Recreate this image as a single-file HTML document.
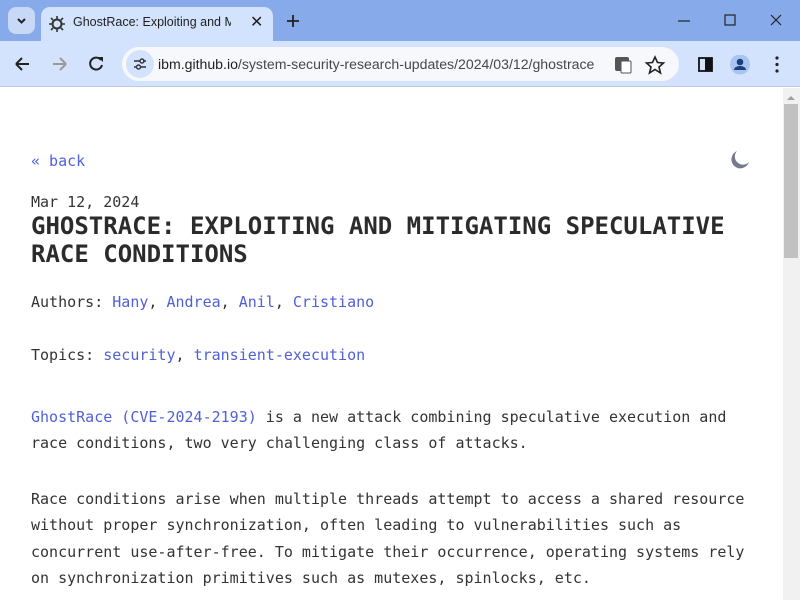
<!DOCTYPE html>
<html><head><meta charset="utf-8"><style>
*{margin:0;padding:0;box-sizing:border-box}
body{width:800px;height:600px;overflow:hidden;background:#fff;font-family:"Liberation Sans",sans-serif;position:relative}
.tabbar{position:absolute;left:0;top:0;width:800px;height:41px;background:#86aaea}
.tabdrop{position:absolute;left:8px;top:7px;width:27px;height:27px;border-radius:8px;background:#c7d9f7}
.tab{position:absolute;left:41px;top:7px;width:232px;height:34px;background:#d3e3fd;border-radius:9px 9px 0 0}
.tab .t{position:absolute;left:32px;top:8px;font-size:12.5px;color:#1f1f1f;white-space:nowrap;width:158px;overflow:hidden}
.tab .x{position:absolute;left:209px;top:5px;font-size:16px;color:#222}
.toolbar{position:absolute;left:0;top:41px;width:800px;height:46px;background:#d3e3fd;border-bottom:1px solid #c0c8d6}
.omni{position:absolute;left:122px;top:47px;width:557px;height:34px;border-radius:17px;background:#f6f8fc}
.omni .ic{position:absolute;left:4px;top:3px;width:28px;height:28px;border-radius:14px;background:#d3e3fd}
.url{position:absolute;left:158px;top:56px;font-size:14.1px;color:#1f1f1f;white-space:nowrap}
.url span{color:#474747}
.content{position:absolute;left:31px;top:89px;font-family:"DejaVu Sans Mono","Liberation Mono",monospace;font-size:15px;color:#333;line-height:26.3px;white-space:nowrap}
a{color:#5060d8;text-decoration:none}
.scroll{position:absolute;left:783px;top:88px;width:17px;height:512px;background:#f1f1f1}
.thumb{position:absolute;left:784px;top:104px;width:14px;height:154px;background:#c1c1c1}
</style></head><body>
<div class="tabbar"></div>
<div class="tabdrop"><svg width="27" height="27"><path d="M10 12l3.5 3.5L17 12" stroke="#222" stroke-width="2" fill="none"/></svg></div>
<div class="tab">
<svg style="position:absolute;left:8px;top:9px" width="16" height="16"><circle cx="8" cy="8" r="4.5" fill="none" stroke="#333" stroke-width="2"/><g stroke="#333" stroke-width="1.6"><path d="M8 0v3M8 13v3M0 8h3M13 8h3M2 2l2 2M12 12l2 2M2 14l2-2M12 4l2-2"/></g></svg>
<div class="t">GhostRace: Exploiting and Mitig</div><div class="x">✕</div></div>
<svg style="position:absolute;left:285px;top:13px" width="16" height="16"><path d="M8 2v12M2 8h12" stroke="#222" stroke-width="1.8"/></svg>
<svg style="position:absolute;left:675px;top:12px" width="120" height="18"><path d="M3 9h12" stroke="#222" stroke-width="1.2"/><rect x="50" y="3" width="10" height="10" fill="none" stroke="#222" stroke-width="1.2"/><path d="M96 3l10 10M106 3l-10 10" stroke="#222" stroke-width="1.2"/></svg>
<div class="toolbar"></div>
<svg style="position:absolute;left:12px;top:54px" width="95" height="20"><path d="M4 10h13M4 10l6-6M4 10l6 6" stroke="#222" stroke-width="2" fill="none"/><path d="M41 10h13M54 10l-6-6M54 10l-6 6" stroke="#999" stroke-width="2" fill="none"/><path d="M89 6a6 6 0 1 0 1 5" stroke="#222" stroke-width="2" fill="none"/><path d="M86 3h5v5z" fill="#222"/></svg>
<div class="omni"><div class="ic"><svg width="28" height="28"><path d="M8 11h6M8 17h3M17 11h3M14 17h6" stroke="#333" stroke-width="1.6"/><circle cx="16" cy="11" r="2" fill="none" stroke="#333" stroke-width="1.4"/><circle cx="12.5" cy="17" r="2" fill="none" stroke="#333" stroke-width="1.4"/></svg></div></div>
<div class="url">ibm.github.io<span>/system-security-research-updates/2024/03/12/ghostrace</span></div>
<svg style="position:absolute;left:613px;top:55px" width="175" height="20"><rect x="2" y="2" width="14" height="14" rx="2" fill="#555"/><rect x="8" y="6" width="10" height="12" rx="1" fill="#fff" stroke="#555"/><path d="M42 2l2.5 5.5 6 .5-4.5 4 1.5 6-5.5-3.5-5.5 3.5 1.5-6-4.5-4 6-.5z" fill="none" stroke="#222" stroke-width="1.6"/><rect x="86" y="3" width="13" height="13" fill="none" stroke="#111" stroke-width="1.8"/><rect x="92" y="3" width="7" height="13" fill="#111"/><circle cx="127" cy="9.5" r="10" fill="#a8c4f0"/><circle cx="127" cy="7" r="3.3" fill="#1b3f7a"/><path d="M121 15a6 4 0 0 1 12 0z" fill="#1b3f7a"/><g fill="#222"><circle cx="164" cy="3" r="1.6"/><circle cx="164" cy="9.5" r="1.6"/><circle cx="164" cy="16" r="1.6"/></g></svg>
<svg style="position:absolute;left:729px;top:149px" width="22" height="22"><path d="M8 2a9 9 0 1 0 12 11A7.5 7.5 0 0 1 8 2z" fill="#737b8c"/></svg>
<div class="scroll"></div><div class="thumb"></div>
<svg style="position:absolute;left:786px;top:94px" width="10" height="8"><path d="M1 6l4-4 4 4z" fill="#a0a0a0"/></svg>
<div class="content">
<div style="position:absolute;top:59px"><a>« back</a></div>
<div style="position:absolute;top:100px">Mar 12, 2024</div>
<div style="position:absolute;top:123px;font-size:24px;font-weight:bold;line-height:28px;color:#2b2b2b">GHOSTRACE: EXPLOITING AND MITIGATING SPECULATIVE<br>RACE CONDITIONS</div>
<div style="position:absolute;top:200px">Authors: <a>Hany</a>, <a>Andrea</a>, <a>Anil</a>, <a>Cristiano</a></div>
<div style="position:absolute;top:253px">Topics: <a>security</a>, <a>transient-execution</a></div>
<div style="position:absolute;top:315px"><a>GhostRace (CVE-2024-2193)</a> is a new attack combining speculative execution and<br>race conditions, two very challenging class of attacks.</div>
<div style="position:absolute;top:397px">Race conditions arise when multiple threads attempt to access a shared resource<br>without proper synchronization, often leading to vulnerabilities such as<br>concurrent use-after-free. To mitigate their occurrence, operating systems rely<br>on synchronization primitives such as mutexes, spinlocks, etc.</div>
</div>
</body></html>
